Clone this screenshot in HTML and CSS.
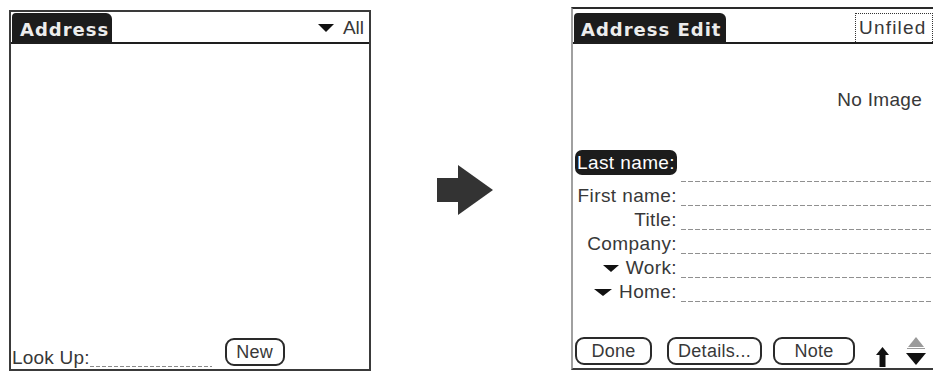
FILE: index.html
```html
<!DOCTYPE html>
<html lang="en">
<head>
    <meta charset="UTF-8">
    <title>Address Book</title>
    <link rel="stylesheet" href="styles.css">
</head>
<body>
    <div class="stage">
        <!-- Address list screen -->
        <section class="screen screen-list">
            <div class="titlebar">
                <span class="tab">Address</span>
                <span class="category">
                    <svg class="tri" width="16" height="8" viewBox="0 0 16 8"><polygon points="0,0 16,0 8,8"/></svg>
                    All
                </span>
            </div>
            <div class="list-body"></div>
            <div class="cmdbar">
                <span class="lookup-label">Look Up:</span>
                <span class="lookup-field"></span>
                <button class="btn btn-new">New</button>
            </div>
        </section>

        <!-- Arrow between screens -->
        <svg class="flow-arrow" width="56" height="50" viewBox="0 0 56 50">
            <rect x="0" y="13" width="23" height="24"/>
            <polygon points="21,0 56,25 21,50"/>
        </svg>

        <!-- Address edit screen -->
        <section class="screen screen-edit">
            <div class="titlebar">
                <span class="tab">Address Edit</span>
                <span class="category-box">Unfiled</span>
            </div>
            <div class="no-image">No Image</div>
            <div class="fields">
                <div class="field-row first">
                    <span class="field-label"><span class="selected">Last name:</span></span>
                    <span class="field-line"></span>
                </div>
                <div class="field-row">
                    <span class="field-label">First name:</span>
                    <span class="field-line"></span>
                </div>
                <div class="field-row">
                    <span class="field-label">Title:</span>
                    <span class="field-line"></span>
                </div>
                <div class="field-row">
                    <span class="field-label">Company:</span>
                    <span class="field-line"></span>
                </div>
                <div class="field-row">
                    <span class="field-label">
                        <svg class="tri" width="16" height="7" viewBox="0 0 16 7"><polygon points="0,0 16,0 8,7"/></svg>
                        Work:
                    </span>
                    <span class="field-line"></span>
                </div>
                <div class="field-row">
                    <span class="field-label">
                        <svg class="tri" width="18" height="7" viewBox="0 0 18 7"><polygon points="0,0 18,0 9,7"/></svg>
                        Home:
                    </span>
                    <span class="field-line"></span>
                </div>
            </div>
            <div class="cmdbar">
                <button class="btn btn-done">Done</button>
                <button class="btn btn-details">Details...</button>
                <button class="btn btn-note">Note</button>
                <svg class="up-arrow" width="13" height="20" viewBox="0 0 13 20">
                    <polygon points="6.5,0 13,8 9.5,8 9.5,20 3.5,20 3.5,8 0,8"/>
                </svg>
                <svg class="scroll" width="20" height="28" viewBox="0 0 20 28">
                    <polygon class="scroll-off" points="10,0 18,10 2,10"/>
                    <rect class="scroll-off" x="1" y="11" width="18" height="1"/>
                    <polygon points="0,16 20,16 10,28"/>
                </svg>
            </div>
        </section>
    </div>
</body>
</html>
```

FILE: styles.css
```css
/* Page */
body {
    margin: 0;
    background: #fff;
    font-family: "Liberation Sans", Arial, sans-serif;
    color: #383838;
}

.stage {
    display: flex;
    align-items: flex-start;
    width: 943px;
    height: 379px;
}

/* Screens */
.screen {
    box-sizing: border-box;
    display: flex;
    flex-direction: column;
    background: #fff;
}

.screen-list {
    margin: 10px 0 0 9px;
    width: 362px;
    height: 361px;
    border: 2px solid #3a3a3a;
}

.screen-edit {
    margin: 7px 0 0 78px;
    width: 362px;
    height: 363px;
    border-top: 2px solid #2a2a2a;
    border-left: 2px solid #a0a0a0;
    border-bottom: 2px solid #3a3a3a;
}

/* Title bar with tab */
.titlebar {
    display: flex;
    align-items: flex-end;
    border-bottom: 2px solid #1e1e1e;
    padding: 1px 0 0 1px;
}

.screen-edit .titlebar {
    padding-top: 4px;
}

.tab {
    background: #1c1c1c;
    color: #ececec;
    font-family: "DejaVu Sans", sans-serif;
    font-weight: bold;
    font-size: 18px;
    letter-spacing: 1px;
    height: 29px;
    box-sizing: border-box;
    padding: 5px 3px 0 8px;
    line-height: 24px;
    border-radius: 4px 6px 0 0;
}

.screen-edit .tab {
    padding-left: 7px;
    padding-right: 5px;
}

.category {
    margin-left: auto;
    align-self: center;
    display: flex;
    align-items: center;
    gap: 9px;
    padding-right: 5px;
    font-size: 19px;
}

.tri {
    fill: #111;
}

.category-box {
    margin-left: auto;
    box-sizing: border-box;
    width: 78px;
    height: 29px;
    border: 1px dotted #333;
    border-bottom: none;
    padding-left: 3px;
    font-size: 19px;
    letter-spacing: 1.2px;
    line-height: 28px;
    white-space: nowrap;
    overflow: hidden;
}

/* List screen */
.list-body {
    flex: 1;
}

.cmdbar {
    display: flex;
    align-items: flex-end;
    padding: 0 0 3px 1px;
}

.lookup-label {
    font-size: 19px;
    line-height: 20px;
    letter-spacing: .2px;
    margin-bottom: -2px;
}

.lookup-field {
    width: 122px;
    height: 1px;
    margin-bottom: -1px;
    background: linear-gradient(to right, #8a8a8a 65%, transparent 0) repeat-x;
    background-size: 6px 1px;
}

/* Buttons */
.btn {
    box-sizing: border-box;
    height: 28px;
    padding: 0;
    background: #fff;
    border: 2px solid #2a2a2a;
    border-radius: 9px;
    font-family: inherit;
    font-size: 18px;
    color: #383838;
    letter-spacing: .3px;
}

.btn-new { width: 60px; margin-left: 13px; }
.btn-done { width: 77px; }
.btn-details { width: 95px; margin-left: 15px; }
.btn-note { width: 82px; margin-left: 11px; }

/* Edit screen */
.no-image {
    margin-top: 46px;
    padding-right: 11px;
    text-align: right;
    font-size: 19px;
    line-height: 20px;
    letter-spacing: .3px;
}

.fields {
    margin-top: 40px;
}

.field-row {
    display: flex;
    align-items: flex-end;
    height: 24px;
}

.field-row.first {
    height: 32px;
}

.field-label {
    width: 104px;
    display: flex;
    justify-content: flex-end;
    align-items: center;
    gap: 7px;
    font-size: 19px;
    line-height: 20px;
    letter-spacing: .4px;
    white-space: nowrap;
}

.field-label .selected {
    background: #1c1c1c;
    color: #fff;
    border-radius: 7px;
    padding: 2px 2px 2px 2px;
    line-height: 21px;
    margin-bottom: 7px;
}

.field-line {
    flex: 1;
    height: 1px;
    margin-left: 4px;
    background: linear-gradient(to right, #909090 70%, transparent 0) repeat-x;
    background-size: 7px 1px;
}

.screen-edit .cmdbar {
    margin-top: auto;
    padding-left: 2px;
}

.up-arrow {
    fill: #111;
    margin: 0 0 -2px 21px;
}

.scroll {
    fill: #111;
    margin-left: 17px;
}

.scroll .scroll-off {
    fill: #9a9a9a;
}

/* Arrow between the two screens */
.flow-arrow {
    fill: #333;
    margin: 165px 0 0 66px;
}
```
